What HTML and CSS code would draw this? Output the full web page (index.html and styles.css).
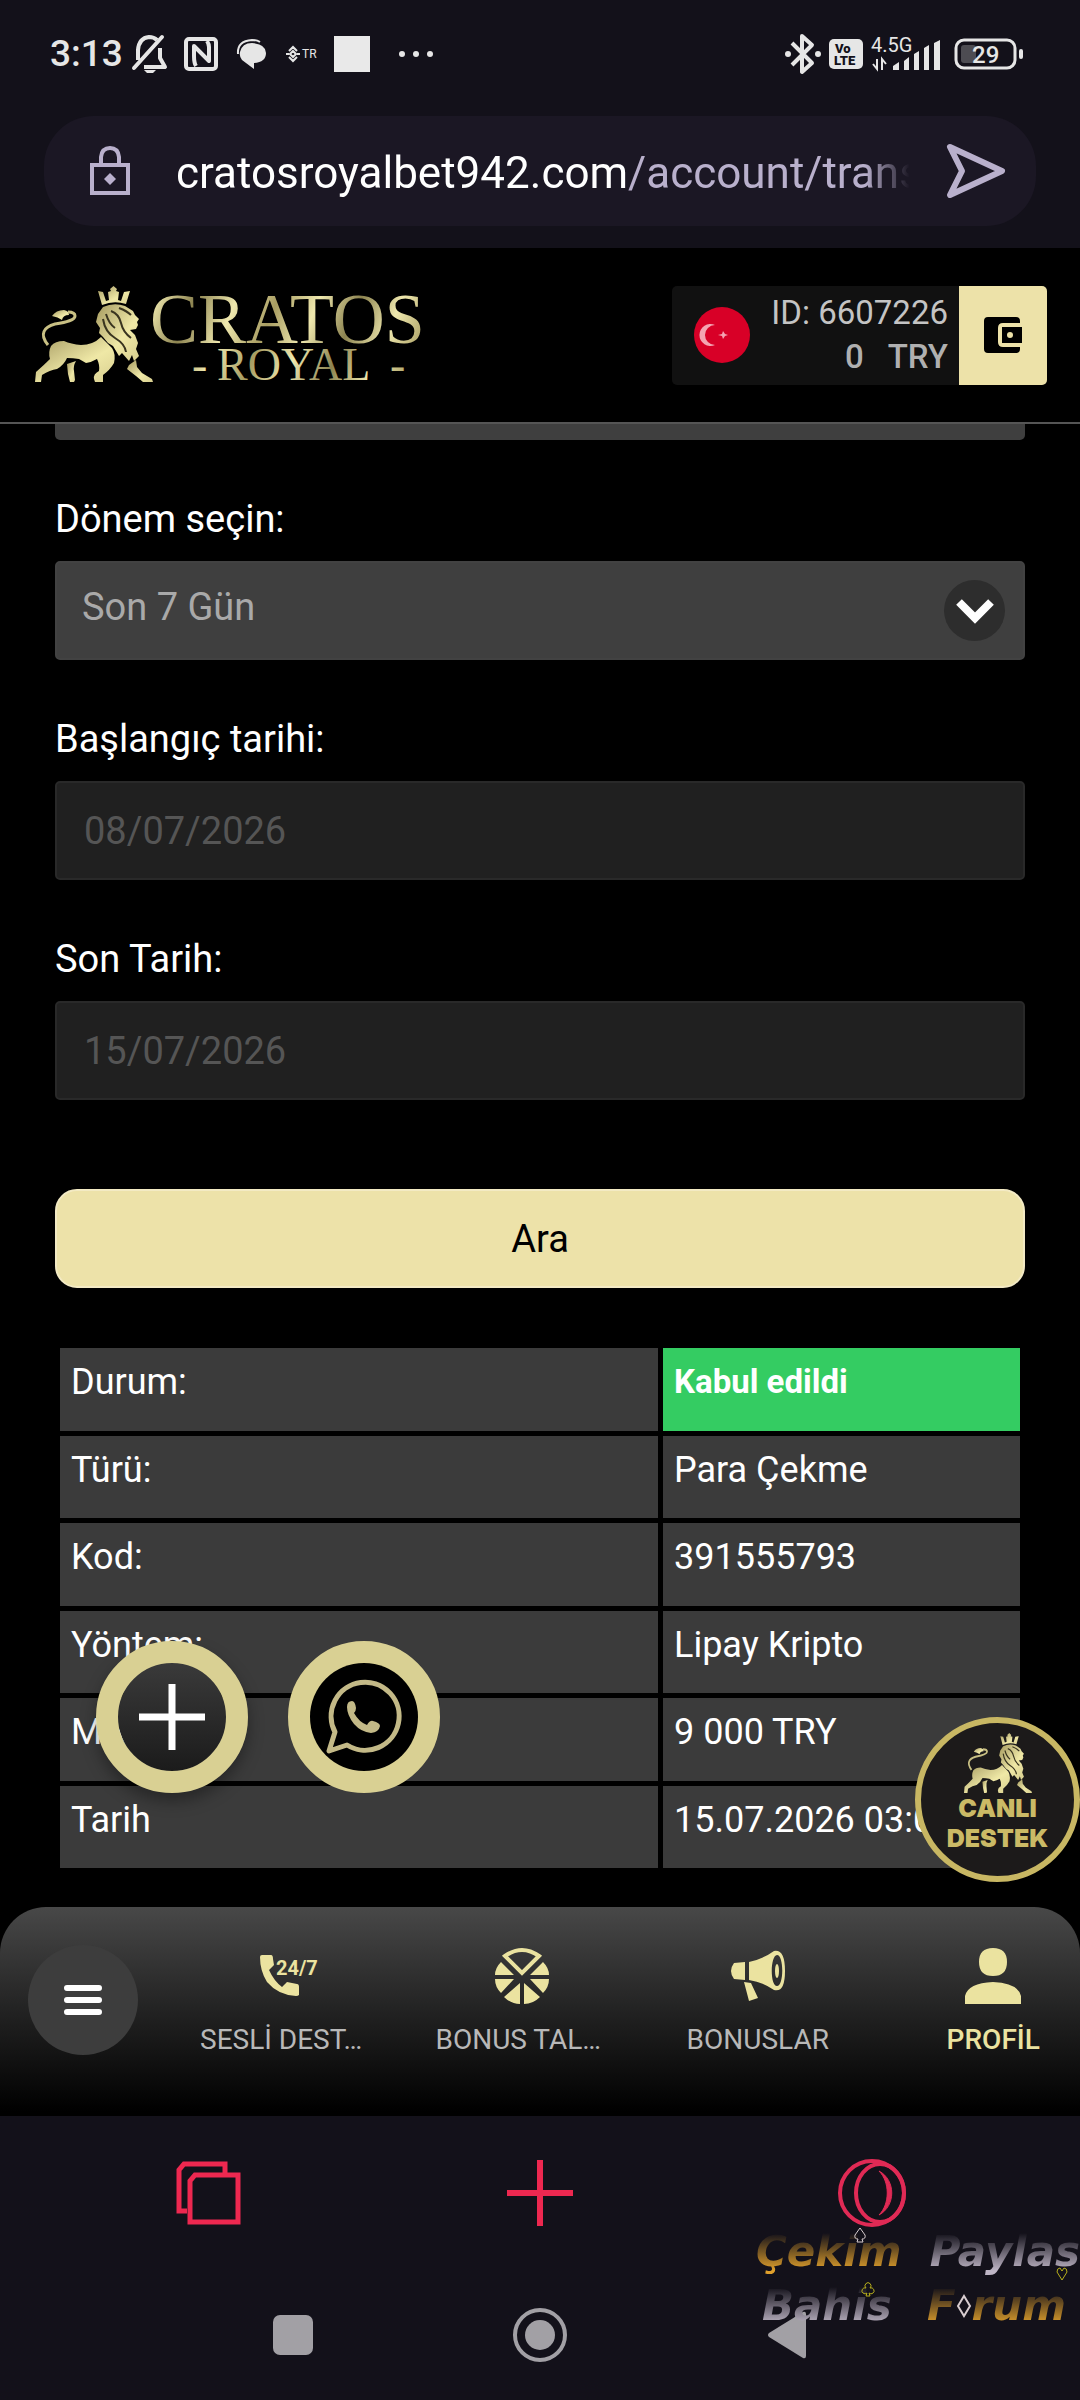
FILE: index.html
```html
<!DOCTYPE html>
<html lang="tr">
<head>
  <meta charset="UTF-8">
  <meta name="viewport" content="width=device-width, initial-scale=1">
  <title>Cratos Royal</title>
  <link rel="stylesheet" href="styles.css">
</head>
<body>

<!-- shared lion shape, used in the logo and in the support badge -->
<svg class="defs" width="0" height="0" aria-hidden="true">
  <defs>
    <linearGradient id="gold" x1="0" y1="0" x2="1" y2="1">
      <stop offset="0" stop-color="#a59a5c"/>
      <stop offset=".3" stop-color="#c9c084"/>
      <stop offset=".6" stop-color="#efe8a6"/>
      <stop offset="1" stop-color="#d8cf90"/>
    </linearGradient>
    <linearGradient id="goldText" gradientUnits="userSpaceOnUse" x1="0" y1="0" x2="70" y2="30" spreadMethod="reflect">
      <stop offset="0" stop-color="#8c8350"/>
      <stop offset=".5" stop-color="#efe8ae"/>
      <stop offset="1" stop-color="#a89d62"/>
    </linearGradient>
    <symbol id="lion" viewBox="0 0 118 96">
      <g fill="url(#gold)">
        <path d="M63 5l5 1 3 9 3-1-1-8 3-1-1-2 3.500-3 3.500 3-1 2 3 1-1 8 3 1 3-9 6-1-4 13q-12-4-24 1z"/>
        <path d="M68 21q11-5 22-1l8 5 2 4 4 4-2 3 1 3-2 4-6 1 5 5 3 8-2 6 3 7-5 5-2-6-3 6-7-8-3 3-6-10-5-3-5-6-4-4 1-5-4-6 2-8z"/>
        <path d="M66 51q-8 8-20 8-10-1-17-4-9 0-13 5-3 6-1 13Q9 79 1 86l-1 10h6l1-7q8-5 15-6 7-4 10-11 6 0 12 1l7 4q6-1 11-4 3 6 2 12-6 3-5 8l1 3h8l0-7q7-5 11-12 2-9-2-15z"/>
        <path d="M32 78l9-3q-3 5-2 10l1 9-1 2h-4l-2-8z"/>
        <path d="M94 79l7-5 1 7 5 6 10 6 1 3h-10l-7-6-9-7z"/>
        <path d="M17 30q4-6 12-6 5 1 5 5-6 0-7 5-4-3-10-4z"/>
      </g>
      <path d="M13 59C4 48 9 41 20 38c12-2 20-4 20-8 0-3-2-4-7-4" fill="none" stroke="#c9c084" stroke-width="3"/>
      <path d="M76 25q8 3 10 12t10 15M68 33q2 13 12 19t11 14M84 22q8 3 12 7M71 28q3 10 9 14" fill="none" stroke="#39341f" stroke-width="2"/>
    </symbol>
  </defs>
</svg>

<div class="status">
  <div class="status-left">
    <div class="clock">
      <span>3:13</span>
      <svg width="36" height="38" viewBox="0 0 36 38" fill="none" stroke="#e6e6e6" stroke-width="4">
        <path d="M2 33L30 2" stroke-linecap="round"/>
        <path d="M6 25V15Q7 3 17 2q5 0 8 3M28 13v10l5 9H12" stroke-linejoin="round"/>
        <path d="M12 35h12l-3 3h-6z" fill="#e6e6e6" stroke="none"/>
      </svg>
    </div>
    <svg width="34" height="34" viewBox="0 0 34 34" fill="none" stroke="#e6e6e6" stroke-width="4">
      <rect x="2" y="2" width="30" height="30" rx="3"/>
      <path d="M12 29q-2-3-2-10V9l15 15V10q0-3-2-6" stroke-linejoin="round"/>
    </svg>
    <svg width="34" height="34" viewBox="0 0 34 34">
      <path d="M4 17Q3 4 18 3q5 0 8 2" fill="none" stroke="#e6e6e6" stroke-width="2"/>
      <path d="M18 6q14 1 14 10 0 9-12 10v6L8 23q-3-4-2-8 2-9 12-9z" fill="#e6e6e6"/>
    </svg>
    <svg width="34" height="20" viewBox="0 0 34 20">
      <path d="M5 7l4-4 4 4M5 13l4 4 4-4M2 10h3M13 10h3M9 7l3 3-3 3-3-3z" fill="none" stroke="#e6e6e6" stroke-width="2"/>
      <text x="18" y="14" class="tiny">TR</text>
    </svg>
    <div class="square"></div>
    <svg width="50" height="10" viewBox="0 0 50 10" fill="#e6e6e6"><circle cx="16" cy="5" r="3"/><circle cx="30" cy="5" r="3"/><circle cx="44" cy="5" r="3"/></svg>
  </div>
  <div class="status-right">
    <svg width="36" height="40" viewBox="0 0 36 40">
      <path d="M7 9l20 20-10 9V2l10 9L7 31" fill="none" stroke="#e6e6e6" stroke-width="4" stroke-linejoin="round"/>
      <circle cx="3" cy="20" r="3" fill="#e6e6e6"/><circle cx="33" cy="20" r="3" fill="#e6e6e6"/>
    </svg>
    <svg width="34" height="30" viewBox="0 0 34 30">
      <rect width="34" height="30" rx="5" fill="#e6e6e6"/>
      <text x="6" y="14" class="volte">Vo</text>
      <text x="5" y="26" class="volte">LTE</text>
    </svg>
    <svg width="75" height="36" viewBox="0 0 75 36" fill="#e6e6e6">
      <text x="0" y="16" class="net">4.5G</text>
      <path d="M6 23v10l-4-5M11 34V23l4 5" fill="none" stroke="#e6e6e6" stroke-width="2"/>
      <path d="M22 34v-4l6-4v8zM33 34V25l5-4v13zM43 34V18l5-3v19zM53 34V12l5-3v25zM63 34V7l6-3v30z"/>
    </svg>
    <svg width="69" height="32" viewBox="0 0 69 32">
      <rect x="2" y="2" width="59" height="28" rx="8" fill="none" stroke="#e6e6e6" stroke-width="3"/>
      <rect x="7" y="7" width="15" height="18" rx="3" fill="#4d4c52"/>
      <rect x="65" y="11" width="4" height="10" rx="2" fill="#e6e6e6"/>
      <text x="18" y="25" class="charge">29</text>
    </svg>
  </div>
</div>

<div class="omnibox">
  <svg width="40" height="50" viewBox="0 0 40 50" fill="none" stroke="#b9b0cc" stroke-width="4">
    <rect x="2" y="19" width="36" height="28"/>
    <path d="M11 19V11q1-9 9-9t9 9v8"/>
    <path d="M20 27l6 6-6 6-6-6z" fill="#b9b0cc" stroke="none"/>
  </svg>
  <div class="url">cratosroyalbet942.com<span>/account/trans</span></div>
  <button class="send" aria-label="Git">
    <svg width="58" height="54" viewBox="0 0 58 54"><path d="M3 3l52 24L3 51l12-24z" fill="none" stroke="#b9b0cc" stroke-width="6" stroke-linejoin="round"/></svg>
  </button>
</div>

<header class="header">
  <svg class="logo" width="394" height="98" viewBox="0 0 394 98">
    <use href="#lion" x="0" y="0" width="118" height="96"/>
    <g fill="url(#goldText)">
      <text x="115" y="57" class="logo-big">CRATOS</text>
      <text x="157" y="94" class="logo-small">-</text>
      <text x="182" y="94" class="logo-small">ROYAL</text>
      <text x="355" y="94" class="logo-small">-</text>
    </g>
  </svg>
  <div class="account">
    <svg class="flag" width="56" height="56" viewBox="0 0 56 56">
      <circle cx="28" cy="28" r="28" fill="#d80027"/>
      <path d="M21 18a11 11 0 1 0 0 20 10 10 0 1 1 0-20z" fill="#f4a3b2"/>
      <path d="M24 28l4-1 1-3 2 3 3 1-3 1-2 3-1-3z" fill="#f4a3b2"/>
    </svg>
    <div class="account-info">
      <div>ID: 6607226</div>
      <div class="balance"><span>0</span><span>TRY</span></div>
    </div>
    <button class="wallet" aria-label="Cüzdan">
      <svg width="38" height="36" viewBox="0 0 38 36">
        <path d="M4 0h28q4 0 4 4v2H19q-5 0-5 5v14q0 5 5 5h17v2q0 4-4 4H4q-4 0-4-4V4q0-4 4-4z"/>
        <path d="M18 10h20v16H18zM26 15a3 3 0 1 0 0 6 3 3 0 0 0 0-6z" fill-rule="evenodd"/>
      </svg>
    </button>
  </div>
</header>

<main class="main">
  <div class="cut-field"></div>

  <div class="field">
    <label for="period">Dönem seçin:</label>
    <div class="select-wrap">
      <select id="period">
        <option>Son 7 Gün</option>
      </select>
      <span class="arrow">
        <svg width="40" height="28" viewBox="0 0 40 28"><path d="M4 5l16 16L36 5" fill="none" stroke="#fff" stroke-width="8"/></svg>
      </span>
    </div>
  </div>

  <div class="field">
    <label for="start">Başlangıç tarihi:</label>
    <input type="text" id="start" value="08/07/2026" readonly>
  </div>

  <div class="field">
    <label for="end">Son Tarih:</label>
    <input type="text" id="end" value="15/07/2026" readonly>
  </div>

  <button class="search">Ara</button>

  <table class="result">
    <tr><td>Durum:</td><td class="ok">Kabul edildi</td></tr>
    <tr><td>Türü:</td><td>Para Çekme</td></tr>
    <tr><td>Kod:</td><td>391555793</td></tr>
    <tr><td>Yöntem:</td><td>Lipay Kripto</td></tr>
    <tr><td>Miktar:</td><td>9 000 TRY</td></tr>
    <tr><td>Tarih</td><td>15.07.2026 03:0</td></tr>
  </table>

  <!-- floating buttons -->
  <div class="fabs">
    <button class="fab fab-plus" aria-label="Ekle">
      <svg width="66" height="66" viewBox="0 0 66 66"><path d="M33 0v66M0 33h66" stroke="#fff" stroke-width="7"/></svg>
    </button>
    <button class="fab fab-wa" aria-label="WhatsApp">
      <svg width="108" height="108" viewBox="0 0 108 108">
        <circle cx="54" cy="54" r="54"/>
        <path d="M19 88l6-19a34 34 0 1 1 12 13z" fill="none" stroke="#c3b987" stroke-width="5" stroke-linejoin="round"/>
        <path d="M37 44q0-6 5-6 3 0 4 7 0 3-2 5 5 9 13 12 3-5 6-4 7 2 7 5-1 6-9 7-10-1-17-9-7-9-7-17z" fill="#c3b987"/>
      </svg>
    </button>
  </div>
  <button class="support">
    <svg width="68" height="60" viewBox="0 0 118 96" preserveAspectRatio="none"><use href="#lion" width="118" height="96"/></svg>
    <span>CANLI</span>
    <span>DESTEK</span>
  </button>
</main>

<div class="nav-wrap">
  <nav class="nav">
    <button class="menu" aria-label="Menü">
      <svg width="40" height="30" viewBox="0 0 40 30" stroke="#fff" stroke-width="6" stroke-linecap="round"><path d="M4 3h32M4 15h32M4 27h32"/></svg>
    </button>
    <a class="nav-item" href="#">
      <svg width="56" height="56" viewBox="0 0 56 56">
        <path d="M3 7h9q2 0 2 4l1 6-5 5q5 11 13 17l5-5 10 2q2 0 2 3v8q-1 1-3 1Q19 47 8 34 1 23 1 9q0-2 2-2z"/>
        <text x="17" y="27" class="phone-text">24/7</text>
      </svg>
      <span class="cut">SESLİ DEST…</span>
    </a>
    <a class="nav-item" href="#">
      <svg width="56" height="56" viewBox="0 0 56 56">
        <path d="M11 8q17-12 34 0L28 25z" fill="none" stroke="#ebe3a0" stroke-width="4"/>
        <path d="M7 14L20 27H1Q1 20 7 14zM49 14L36 27h19q0-7-6-13zM1 31h19L7 45Q1 39 1 31zM55 31H36l13 14q6-6 6-14zM26 35v21q-9 0-16-7zM30 35v21q9 0 16-7z"/>
      </svg>
      <span class="cut">BONUS TAL…</span>
    </a>
    <a class="nav-item" href="#">
      <svg width="56" height="56" viewBox="0 0 56 56">
        <path d="M4 15l11-1v18L4 31q-6-8 0-16zM19 14q14-3 25-11 11-2 11 20t-11 19Q33 34 19 32zM14 34l7 1 7 15-9 3zM47 7c-7 1-7 31 0 31s7-31 0-31z" fill-rule="evenodd"/>
        <ellipse cx="47" cy="23" rx="2" ry="7"/>
      </svg>
      <span>BONUSLAR</span>
    </a>
    <a class="nav-item active" href="#">
      <svg width="56" height="56" viewBox="0 0 56 56">
        <path d="M28 0q14 0 14 14T28 28 14 14 28 0zM0 56v-8q3-13 28-14 25 1 28 14v8z"/>
      </svg>
      <span>PROFİL</span>
    </a>
  </nav>
</div>

<div class="browser-bar">
  <button aria-label="Sekmeler">
    <svg width="66" height="66" viewBox="0 0 66 66" fill="none" stroke="#ee2850" stroke-width="5">
      <path d="M50 13V4H9L4 10v41h8"/>
      <path d="M20 15h43v47H15V21z"/>
    </svg>
  </button>
  <button aria-label="Yeni sekme">
    <svg width="66" height="66" viewBox="0 0 66 66" stroke="#ee2850" stroke-width="6"><path d="M33 0v66M0 33h66"/></svg>
  </button>
  <button aria-label="Opera">
    <svg width="70" height="70" viewBox="0 0 70 70" fill="none" stroke="#e02a55" stroke-width="4">
      <circle cx="35" cy="35" r="32"/>
      <ellipse cx="43" cy="35" rx="24" ry="29"/>
      <path d="M42 13C59 22 59 48 42 57 53 46 53 24 42 13z" fill="#e02a55" stroke-width="1"/>
    </svg>
  </button>
</div>

<div class="system-bar">
  <button aria-label="Son uygulamalar"><svg width="40" height="40" viewBox="0 0 40 40"><rect width="40" height="40" rx="7"/></svg></button>
  <button aria-label="Ana ekran">
    <svg width="54" height="54" viewBox="0 0 54 54"><circle cx="27" cy="27" r="25" fill="none" stroke="#a2a0a5" stroke-width="4"/><circle cx="27" cy="27" r="15"/></svg>
  </button>
  <button aria-label="Geri"><svg width="38" height="48" viewBox="0 0 38 48"><path d="M1 22L35 1q3-1 3 2v42q0 3-3 2L1 26q-2-2 0-4z"/></svg></button>

  <!-- forum signature -->
  <div class="stamp">
    <div class="stamp-row"><span class="gold">Çekim</span><span class="silver">Paylas</span></div>
    <div class="stamp-row">
      <span class="silver">Bahis</span>
      <div class="forum"><span class="gold">F</span><svg width="16" height="24" viewBox="0 0 16 24"><path d="M8 2l6 10-6 10-6-10z" fill="none" stroke="#d8cdd0" stroke-width="2"/></svg><span class="gold">rum</span></div>
    </div>
    <svg class="suit spade" width="14" height="16" viewBox="0 0 14 16"><path d="M7 1l5 7q1 4-3 4l1 3H4l1-3q-4 0-3-4z"/></svg>
    <svg class="suit club" width="14" height="16" viewBox="0 0 14 16"><path d="M5 7a3 3 0 1 1 4 0 3 3 0 1 1-1 5l1 3H5l1-3a3 3 0 1 1-1-5z"/></svg>
    <svg class="suit heart" width="12" height="14" viewBox="0 0 12 14"><path d="M6 13L1 5q0-4 3-4l2 3 2-3q3 0 3 4z"/></svg>
  </div>
</div>

</body>
</html>
```
FILE: styles.css
```css
* {
  box-sizing: border-box;
}
body {
  margin: 0;
  min-height: 100vh;
  display: flex;
  flex-direction: column;
  background: #13111a;
  color: #fff;
  font-family: Roboto, "Liberation Sans", sans-serif;
}
button {
  border: 0;
  padding: 0;
  background: none;
  font-family: inherit;
  cursor: pointer;
}
svg {
  display: block;
  flex: none;
  overflow: visible;
}
.defs {
  position: absolute;
}

/* phone status bar */
.status {
  display: flex;
  justify-content: space-between;
  padding: 32px 57px 40px 50px;
  height: 116px;
}
.status-left,
.status-right,
.clock {
  display: flex;
  align-items: center;
}
.status-left {
  gap: 16px;
}
.status-right {
  gap: 8px;
}
.clock {
  gap: 9px;
  font-size: 37px;
  font-weight: 500;
  line-height: 44px;
  color: #e6e6e6;
}
.square {
  width: 36px;
  height: 36px;
  background: #e9e9e9;
}
.tiny {
  font-size: 12px;
  fill: #e6e6e6;
}
.volte {
  font-size: 13px;
  font-weight: 900;
  fill: #13111a;
}
.net {
  font-size: 20px;
}
.charge {
  font-size: 24px;
  font-weight: 500;
  fill: #e6e6e6;
}

/* address bar */
.omnibox {
  display: flex;
  align-items: center;
  height: 110px;
  margin: 0 44px 22px;
  padding: 0 31px 0 46px;
  border-radius: 50px;
  background: #1b1724;
}
.url {
  flex: 1;
  min-width: 0;
  margin: 0 30px 0 46px;
  padding-top: 4px;
  overflow: hidden;
  white-space: nowrap;
  font-size: 44px;
  line-height: 56px;
  -webkit-mask-image: linear-gradient(to right, #000 93%, transparent 99%);
  mask-image: linear-gradient(to right, #000 93%, transparent 99%);
}
.url span {
  color: #b9b0cc;
}

/* site header */
.header {
  display: flex;
  justify-content: space-between;
  align-items: center;
  height: 176px;
  padding: 0 33px 0 35px;
  background: #000;
  border-bottom: 2px solid #555;
}
.logo-big {
  font-family: "Liberation Serif", serif;
  font-size: 72px;
}
.logo-small {
  font-family: "Liberation Serif", serif;
  font-size: 46px;
}
.account {
  display: flex;
  align-items: center;
  height: 99px;
  padding-left: 22px;
  border-radius: 5px;
  overflow: hidden;
  background: #111;
}
.account-info {
  margin: 0 11px 0 21px;
  font-size: 33px;
  line-height: 44px;
  color: #c4c4c4;
  text-align: right;
}
.balance {
  display: flex;
  justify-content: flex-end;
  gap: 24px;
  font-weight: 500;
  color: #b0b0b0;
}
.wallet {
  display: flex;
  align-items: center;
  justify-content: center;
  width: 88px;
  height: 99px;
  background: #ede2a9;
}

/* filter form */
.main {
  position: relative;
  flex: 1;
  padding: 0 55px 34px;
  background: #000;
}
.cut-field {
  height: 16px;
  border-radius: 0 0 5px 5px;
  background: #3f3f3f;
}
.field {
  margin-top: 57px;
}
.field label {
  display: block;
  margin-bottom: 20px;
  font-size: 38px;
  line-height: 44px;
}
.field input,
.field select {
  display: block;
  width: 100%;
  height: 99px;
  padding: 0 27px;
  border: 2px solid #292929;
  border-radius: 5px;
  background: #202020;
  color: #555;
  font-family: inherit;
  font-size: 38px;
  outline: 0;
}
.field select {
  appearance: none;
  padding: 0 25px 7px;
  border-color: #424242;
  background: #3f3f3f;
  color: #a9a9a9;
}
.select-wrap {
  position: relative;
}
.arrow {
  position: absolute;
  top: 19px;
  right: 20px;
  display: flex;
  align-items: center;
  justify-content: center;
  width: 61px;
  height: 61px;
  border-radius: 50%;
  background: #2d2d2d;
  pointer-events: none;
}
.search {
  display: block;
  width: 100%;
  height: 99px;
  margin-top: 89px;
  border: 2px solid #f3eac4;
  border-radius: 22px;
  background: #ede2a9;
  color: #000;
  font-size: 38px;
}

/* transaction table */
.result {
  width: 100%;
  height: 530px;
  margin-top: 55px;
  border-collapse: separate;
  border-spacing: 5px;
  table-layout: fixed;
  font-size: 36px;
  line-height: 42px;
}
.result td {
  padding: 13px 11px 0;
  background: #3b3b3b;
  vertical-align: top;
  white-space: nowrap;
}
.result td:first-child {
  width: 598px;
}
.result .ok {
  background: #34cc62;
  font-size: 33px;
  font-weight: 700;
}

/* floating buttons */
.fabs {
  position: absolute;
  left: 96px;
  bottom: 114px;
  display: flex;
  gap: 40px;
}
.fab {
  display: flex;
  align-items: center;
  justify-content: center;
  width: 152px;
  height: 152px;
  border: 22px solid #d9d093;
  border-radius: 50%;
}
.fab-plus {
  background: linear-gradient(#3a3a3a, #1b1b1b) padding-box;
  box-shadow: 0 8px 16px rgba(0, 0, 0, .35);
}
.fab-wa {
  background: #d9d093;
}
.support {
  position: absolute;
  right: 0;
  bottom: 25px;
  display: flex;
  flex-direction: column;
  align-items: center;
  width: 165px;
  height: 165px;
  padding-top: 10px;
  border: 6px solid #c8b763;
  border-radius: 50%;
  background: #1c1a1a;
  color: #cbba66;
  font-family: Inter, Roboto, sans-serif;
  font-size: 25px;
  font-weight: 900;
  line-height: 30px;
}

/* bottom menu */
.nav-wrap {
  background: #000;
}
.nav {
  display: flex;
  gap: 62px;
  height: 209px;
  padding-left: 28px;
  border-radius: 46px 46px 0 0;
  background: linear-gradient(#484848, #222 50%, #000 98%);
}
.menu {
  display: flex;
  align-items: center;
  justify-content: center;
  flex: none;
  width: 110px;
  height: 110px;
  margin-top: 38px;
  border-radius: 50%;
  background: #3d3d3d;
}
.nav-item {
  display: flex;
  flex: 1;
  flex-direction: column;
  align-items: center;
  min-width: 0;
  padding-top: 41px;
  color: #b8b8b8;
  font-size: 28px;
  line-height: 32px;
  text-decoration: none;
  white-space: nowrap;
}
.nav-item svg {
  margin-bottom: 20px;
  fill: #ebe3a0;
}
.nav-item .cut {
  align-self: flex-start;
}
.nav-item.active {
  color: #ebe3a0;
  font-weight: 500;
}
.phone-text {
  font-size: 20px;
  font-weight: 700;
}

/* browser and system buttons */
.browser-bar,
.system-bar {
  display: grid;
  grid-template-columns: repeat(3, 1fr);
  justify-items: center;
  align-items: center;
}
.browser-bar {
  height: 154px;
  padding: 0 42px;
}
.system-bar {
  position: relative;
  height: 130px;
  padding: 0 170px;
  fill: #a2a0a5;
}

/* signature drawn over the bars */
.stamp {
  position: absolute;
  right: 0;
  bottom: 67px;
  width: 324px;
  font-family: "DejaVu Sans", sans-serif;
  font-size: 42px;
  font-style: italic;
  font-weight: 700;
  line-height: 54px;
  pointer-events: none;
}
.stamp-row {
  display: flex;
  align-items: center;
  justify-content: space-between;
}
.stamp-row:nth-child(2) {
  padding: 0 14px 0 6px;
}
.forum {
  display: flex;
  align-items: center;
}
.gold,
.silver {
  background: linear-gradient(#13111a 15%, #e0a02c 85%);
  -webkit-background-clip: text;
  background-clip: text;
  color: transparent;
}
.silver {
  background-image: linear-gradient(#13111a 15%, #bfb6c6 85%);
}
.suit {
  position: absolute;
  fill: none;
  stroke: #b8b01c;
  stroke-width: 1;
}
.spade {
  top: 2px;
  left: 97px;
  stroke: #d8cdd0;
}
.club {
  top: 56px;
  left: 105px;
}
.heart {
  top: 42px;
  right: 12px;
}
```
